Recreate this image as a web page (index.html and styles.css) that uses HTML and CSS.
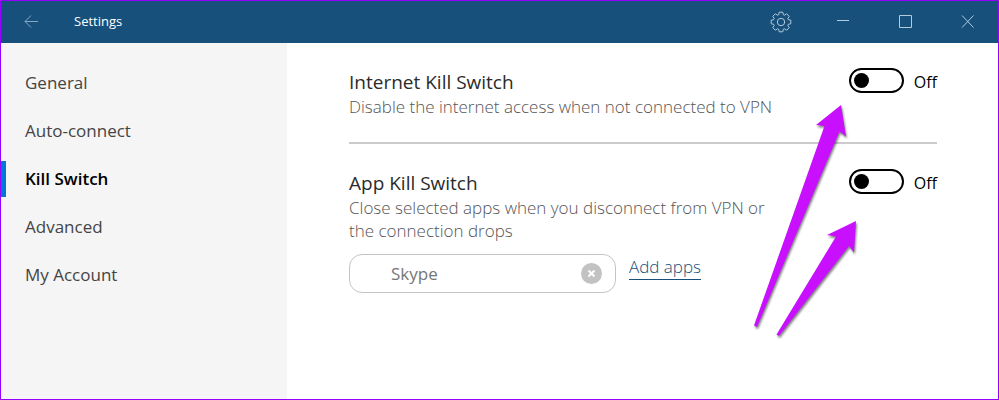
FILE: index.html
```html
<!DOCTYPE html>
<html lang="en">

<head>
    <meta charset="UTF-8">
    <title>Settings</title>
    <link rel="stylesheet" href="styles.css">
</head>

<body>

    <div class="window">
        <header class="titlebar">
            <button class="titlebar-btn back" type="button" aria-label="Back">
                <svg width="14" height="14" viewBox="0 0 14 14"><path d="M14 6.500H1M7 .500L1 6.500l6 6"/></svg>
            </button>
            <h1 class="titlebar-text">Settings</h1>
            <button class="titlebar-btn" type="button" aria-label="Options">
                <svg width="22" height="22" viewBox="-11 -11 22 22">
                    <path d="M-1.8 -9.8H1.8L2.3 -7.3L3.5 -6.8L5.7 -8.2L8.2 -5.7L6.8 -3.5L7.3 -2.3L9.8 -1.8V1.8L7.3 2.3L6.8 3.5L8.2 5.7L5.7 8.2L3.5 6.8L2.3 7.3L1.8 9.8H-1.8L-2.3 7.3L-3.5 6.8L-5.7 8.2L-8.2 5.7L-6.8 3.5L-7.3 2.3L-9.8 1.8V-1.8L-7.3 -2.3L-6.8 -3.5L-8.2 -5.7L-5.7 -8.2L-3.5 -6.8L-2.3 -7.3Z"/>
                    <circle r="3.7"/>
                </svg>
            </button>
            <button class="titlebar-btn" type="button" aria-label="Minimize">
                <svg width="14" height="14" viewBox="0 0 14 14"><path d="M1 5.5h12"/></svg>
            </button>
            <button class="titlebar-btn" type="button" aria-label="Maximize">
                <svg width="14" height="14" viewBox="0 0 14 14"><path d="M1.5 .5h12v12h-12z"/></svg>
            </button>
            <button class="titlebar-btn" type="button" aria-label="Close">
                <svg width="14" height="14" viewBox="0 0 14 14"><path d="M2 .5l11.500 12M13.500 .5l-11.500 12"/></svg>
            </button>
        </header>

        <div class="body">
            <nav class="sidebar">
                <a class="nav-item" href="#general">General</a>
                <a class="nav-item" href="#auto-connect">Auto-connect</a>
                <a class="nav-item active" href="#kill-switch" aria-current="page">Kill Switch</a>
                <a class="nav-item" href="#advanced">Advanced</a>
                <a class="nav-item" href="#account">My Account</a>
            </nav>

            <main class="content">
                <section class="setting">
                    <div class="setting-text">
                        <h2 class="setting-title" id="internet-title">Internet Kill Switch</h2>
                        <p class="setting-desc">Disable the internet access when not connected to VPN</p>
                    </div>
                    <div class="switch">
                        <input class="switch-input" type="checkbox" role="switch" id="internet" aria-labelledby="internet-title">
                        <label class="switch-label" for="internet">Off</label>
                    </div>
                </section>

                <section class="setting">
                    <div class="setting-text">
                        <h2 class="setting-title" id="app-title">App Kill Switch</h2>
                        <p class="setting-desc">Close selected apps when you disconnect from VPN or the connection drops</p>
                        <div class="apps">
                            <div class="app-field">
                                <input class="app-input" type="text" value="Skype" aria-label="Selected app">
                                <button class="app-remove" type="button" aria-label="Remove Skype">
                                    <svg width="7" height="7" viewBox="0 0 7 7"><path d="M.5 .5l6 6M6.5 .5l-6 6"/></svg>
                                </button>
                            </div>
                            <a class="app-add" href="#add">Add apps</a>
                        </div>
                    </div>
                    <div class="switch">
                        <input class="switch-input" type="checkbox" role="switch" id="app" aria-labelledby="app-title">
                        <label class="switch-label" for="app">Off</label>
                    </div>
                </section>

                <!-- Arrows pointing at the two switches -->
                <svg class="arrows" width="120" height="250" viewBox="740 95 120 250" aria-hidden="true">
                    <path d="M841 105L816 125L824.500 126L754 325.500L757 327L839.500 131.500L846 136.500Z"/>
                    <path d="M856 221L827 235L836 236.500L776.500 334.500L779 336L849 246L854 252.500Z"/>
                </svg>
            </main>
        </div>
    </div>

</body>

</html>
```

FILE: styles.css
```css
* {
    box-sizing: border-box;
}

body {
    margin: 0;
    font-family: "Open Sans", "Noto Sans", sans-serif;
    font-size: 17px;
    color: #2b2b2b;
}

h1,
h2,
p {
    margin: 0;
    font-weight: 400;
}

button {
    padding: 0;
    border: 0;
    background: none;
}

svg {
    display: block;
    fill: none;
}

.window {
    display: flex;
    flex-direction: column;
    min-height: 100vh;
    border: 1px solid #9500ff;
    background: #fff;
}

/* Title bar */
.titlebar {
    display: flex;
    align-items: center;
    height: 42px;
    background: #16507b;
}

.titlebar-btn {
    display: flex;
    align-items: center;
    justify-content: center;
    width: 62px;
    height: 42px;
    stroke: #b4cbdc;
}

.back {
    width: 60px;
    margin-right: 13px;
    stroke: #86a8c2;
}

.titlebar-text {
    flex: 1;
    font-size: 13px;
    line-height: 40px;
    align-self: flex-start;
    color: #fff;
}

/* Sidebar */
.body {
    display: flex;
    flex: 1;
}

.sidebar {
    display: flex;
    flex-direction: column;
    flex: none;
    gap: 12px;
    width: 286px;
    padding-top: 22px;
    background: #f5f5f5;
}

.nav-item {
    padding-left: 19px;
    border-left: 5px solid transparent;
    line-height: 36px;
    color: #444;
    text-decoration: none;
}

.nav-item.active {
    border-left-color: #0078d7;
    font-weight: 600;
    color: #000;
}

/* Settings */
.content {
    position: relative;
    flex: 1;
    max-width: 650px;
    padding-left: 62px;
}

.setting {
    display: flex;
    justify-content: space-between;
    padding: 27px 0 24px;
}

.setting + .setting {
    border-top: 2px solid #ccc;
}

.setting-text {
    max-width: 440px;
}

.setting-title {
    font-size: 19px;
    line-height: 25px;
}

.setting-desc {
    font-weight: 300;
    line-height: 23px;
    color: #555;
}

/* Switch */
.switch {
    display: flex;
    align-items: flex-start;
    gap: 10px;
    margin-top: -2px;
}

.switch-input {
    appearance: none;
    width: 55px;
    height: 25px;
    margin: 0;
    padding: 3px;
    border: 2px solid #000;
    border-radius: 13px;
}

.switch-input::before {
    content: "";
    display: block;
    width: 15px;
    height: 15px;
    border-radius: 50%;
    background: #000;
}

.switch-label {
    font-size: 16px;
    line-height: 28px;
    color: #000;
}

/* Apps */
.apps {
    display: flex;
    gap: 13px;
    margin-top: 12px;
}

.app-field {
    display: flex;
    align-items: center;
    width: 267px;
    height: 39px;
    padding: 0 13px 0 41px;
    border: 1px solid #c4c4c4;
    border-radius: 13px;
}

.app-input {
    flex: 1;
    min-width: 0;
    padding: 0;
    border: 0;
    outline: 0;
    font: inherit;
    color: #767676;
}

.app-remove {
    display: flex;
    align-items: center;
    justify-content: center;
    width: 21px;
    height: 21px;
    border-radius: 50%;
    background: #c2c2c2;
    stroke: #fff;
    stroke-width: 2;
}

.app-add {
    align-self: flex-start;
    border-bottom: 1px solid #16507b;
    font-weight: 300;
    line-height: 25px;
    color: #16507b;
    text-decoration: none;
}

.arrows {
    position: absolute;
    top: 52px;
    left: 453px;
    pointer-events: none;
    fill: #c810ff;
    filter: drop-shadow(1px 2px 1px rgba(0, 0, 0, 0.5));
}
```
